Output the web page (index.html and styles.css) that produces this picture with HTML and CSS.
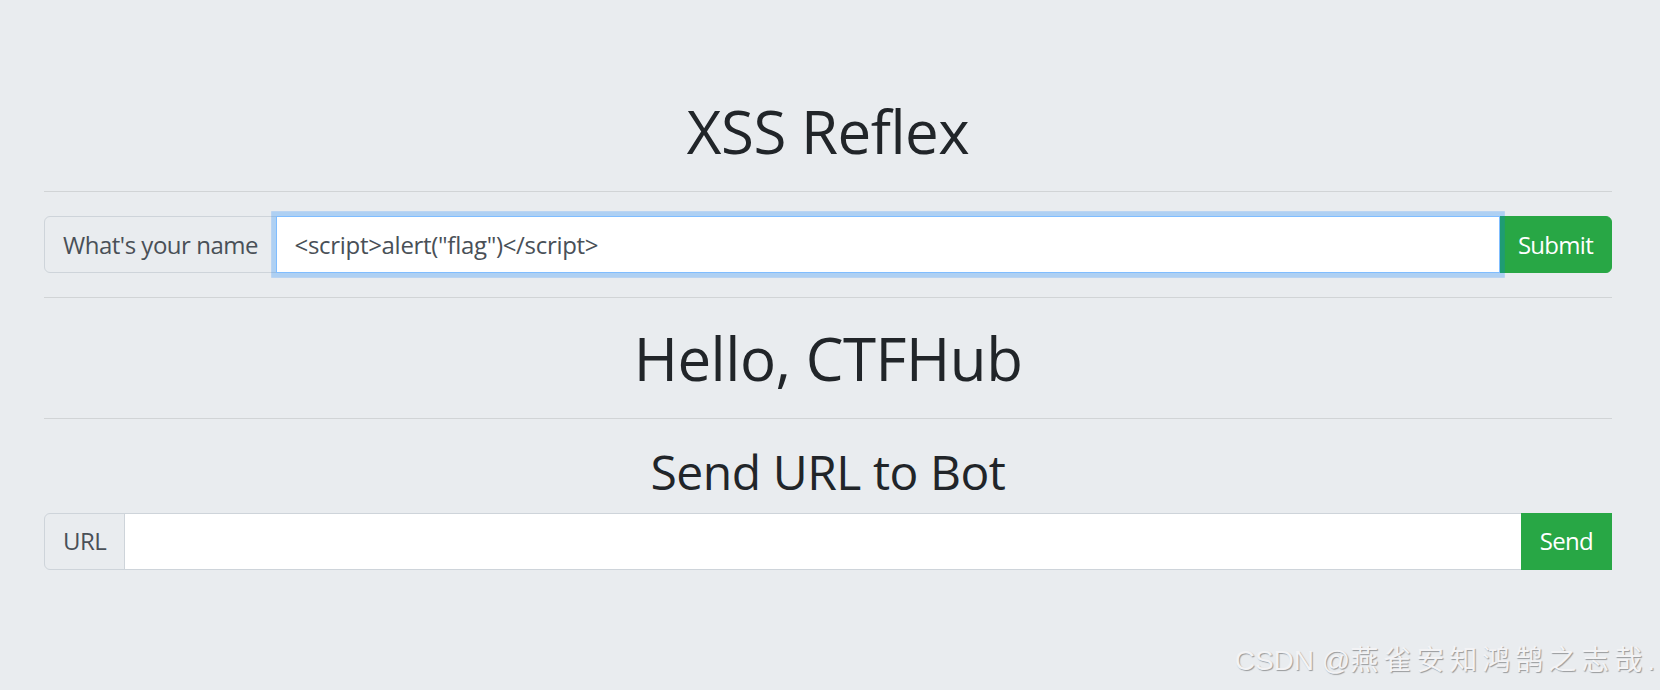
FILE: index.html
```html
<!DOCTYPE html>
<html lang="en">
<head>
<meta charset="utf-8">
<title>XSS Reflex</title>
<link rel="stylesheet" href="styles.css">
</head>
<body>
<div class="page">
  <h1 class="title">XSS Reflex</h1>
  <hr class="rule">
  <form class="input-group">
    <span class="addon">What's your name</span>
    <input class="field focused" type="text" value="&lt;script&gt;alert(&quot;flag&quot;)&lt;/script&gt;">
    <button class="btn btn-rounded" type="button">Submit</button>
  </form>
  <hr class="rule">
  <h1 class="title">Hello, CTFHub</h1>
  <hr class="rule">
  <h2 class="subtitle">Send URL to Bot</h2>
  <form class="input-group">
    <span class="addon">URL</span>
    <input class="field" type="text">
    <button class="btn" type="button">Send</button>
  </form>
</div>
<div class="watermark">CSDN @<span class="cjk">燕雀安知鸿鹄之志哉</span>.</div>
</body>
</html>
```
FILE: styles.css
```css
html, body {
  margin: 0;
  padding: 0;
}
body {
  background: #e9ecef;
  width: 1660px;
  height: 690px;
  overflow: hidden;
  position: relative;
  font-family: "Open Sans", "Noto Sans", sans-serif;
  color: #212529;
}
.page {
  padding: 95px 48px 0 44px;
  letter-spacing: -0.03em;
}
.title {
  margin: 0 0 12px;
  font-size: 60px;
  line-height: 72px;
  font-weight: 400;
  text-align: center;
  color: #212529;
}
.subtitle {
  margin: 0 0 12px;
  font-size: 48px;
  line-height: 57.6px;
  font-weight: 400;
  text-align: center;
  color: #212529;
}
.rule {
  margin: 24px 0;
  border: 0;
  border-top: 1.5px solid rgba(0, 0, 0, 0.1);
  height: 0;
}
.input-group {
  display: flex;
  align-items: stretch;
  margin: 0;
}
.addon {
  display: flex;
  align-items: center;
  padding: 9px 18px;
  font-size: 24px;
  line-height: 36px;
  color: #495057;
  background: #e9ecef;
  border: 1.5px solid #ced4da;
  border-radius: 6px 0 0 6px;
  white-space: nowrap;
}
.field {
  flex: 1;
  min-width: 0;
  margin-left: -1.5px;
  padding: 9px 18px;
  font-family: inherit;
  font-size: 24px;
  line-height: 36px;
  letter-spacing: -0.3px;
  height: 57px;
  box-sizing: border-box;
  color: #495057;
  background: #fff;
  border: 1.5px solid #ced4da;
  border-radius: 0;
  outline: none;
}
.field.focused {
  position: relative;
  z-index: 3;
  border-color: #80bdff;
  box-shadow: 0 0 0 4.8px rgba(0, 123, 255, 0.25);
}
.btn {
  margin-left: -1.5px;
  padding: 9px 18px;
  font-family: inherit;
  font-size: 24px;
  line-height: 36px;
  letter-spacing: -0.03em;
  color: #fff;
  background: #28a745;
  border: 1.5px solid #28a745;
  border-radius: 0;
  cursor: pointer;
}
.btn-rounded {
  border-radius: 0 6px 6px 0;
}
.watermark {
  position: absolute;
  right: 5px;
  top: 641px;
  font-family: "Liberation Sans", "Noto Sans CJK SC", sans-serif;
  font-size: 28px;
  line-height: 34px;
  color: #f3f3f5;
  text-shadow: 1px 1px 1px rgba(0, 0, 0, 0.35);
  white-space: nowrap;
}
.cjk {
  font-family: "Noto Sans CJK SC", sans-serif;
  letter-spacing: 5px;
}
```
